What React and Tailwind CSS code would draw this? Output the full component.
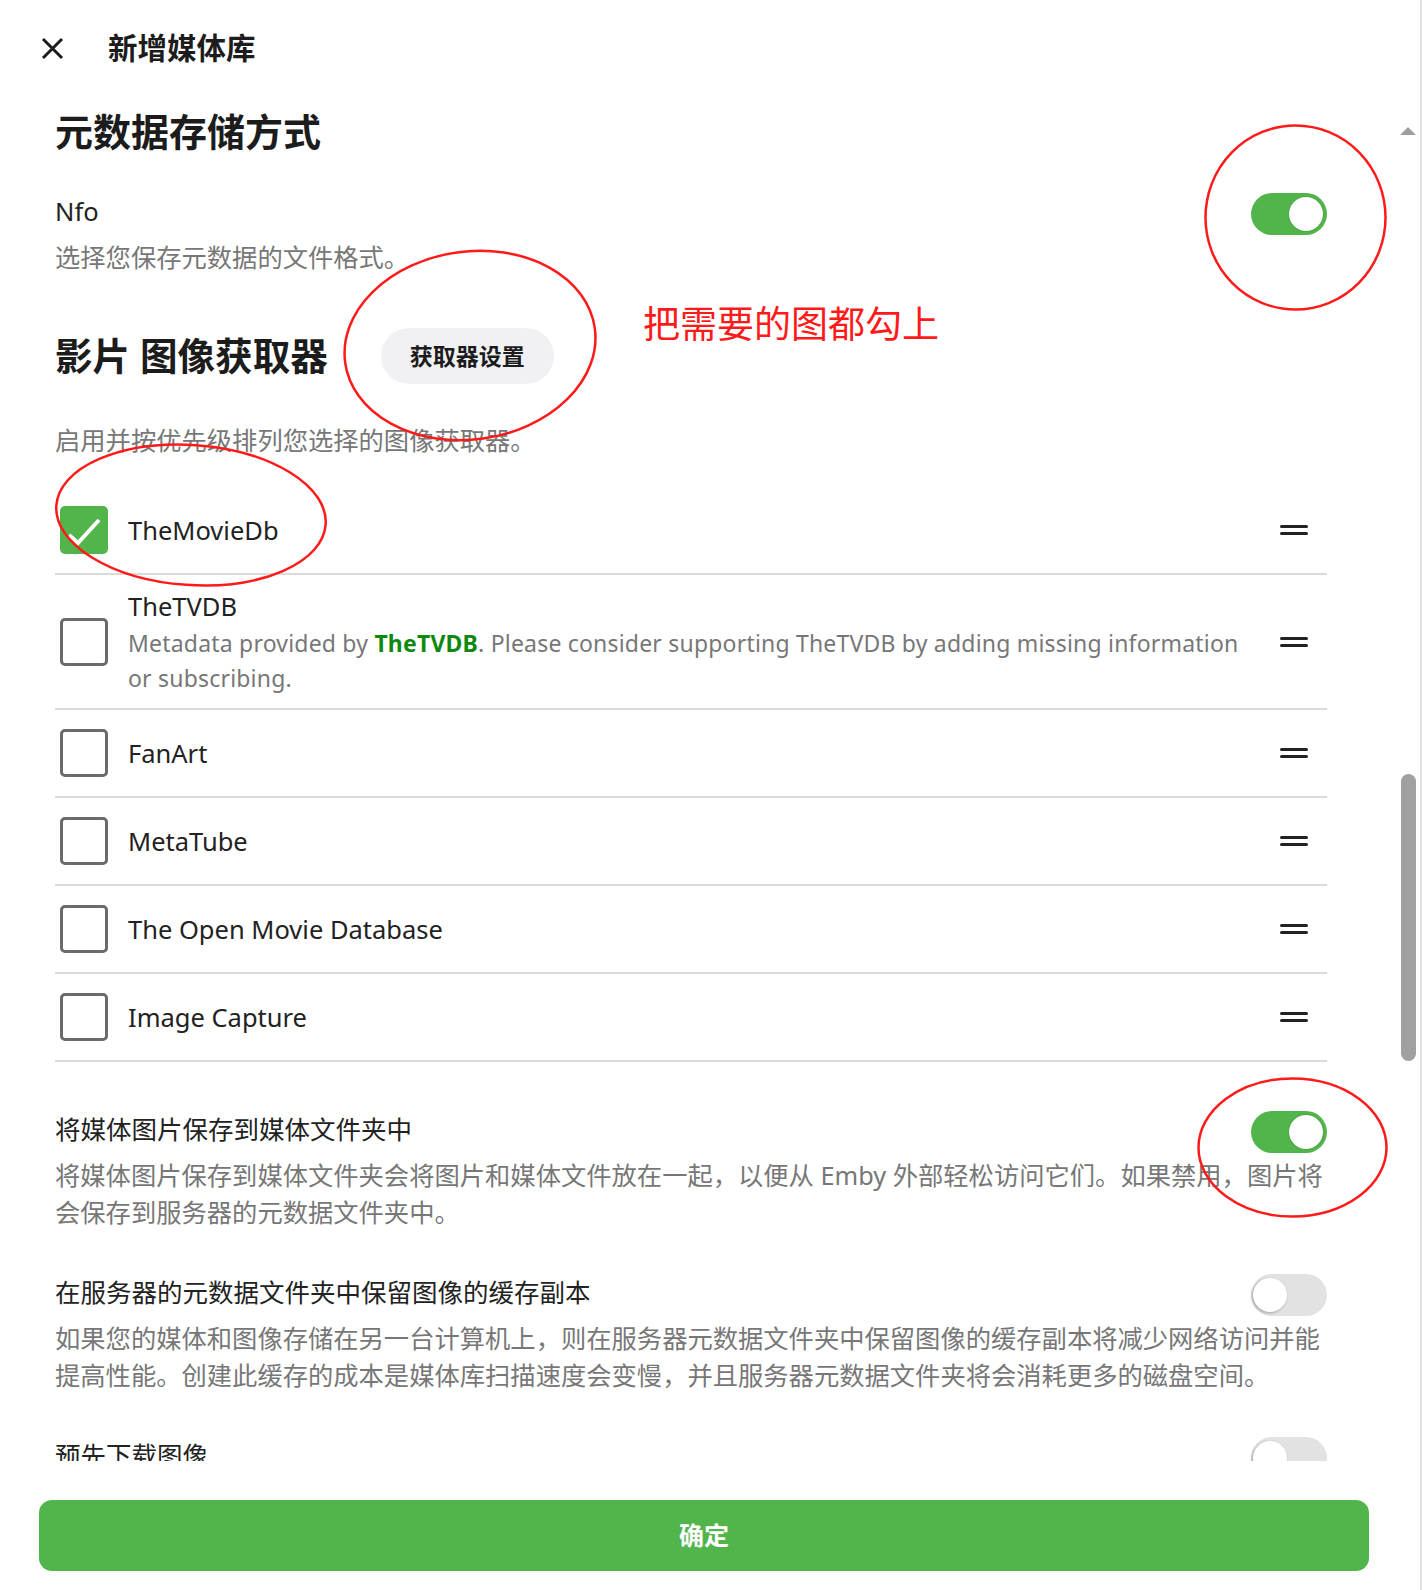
import React from 'react';

const fetchers = [
  { name: 'TheMovieDb', checked: true },
  { name: 'TheTVDB', tvdb: true },
  { name: 'FanArt' },
  { name: 'MetaTube' },
  { name: 'The Open Movie Database' },
  { name: 'Image Capture' },
];

const Toggle = ({ on }) => (
  <div className={`relative h-[42px] w-[76px] shrink-0 rounded-full ${on ? 'bg-[#52b54b]' : 'bg-[#e2e2e2]'}`}>
    <div
      className={`absolute top-[4px] h-[34px] w-[34px] rounded-full bg-white ${
        on ? 'right-[4px] shadow-[0_0_2px_rgba(0,0,0,0.25)]' : 'left-[2px] shadow-[-1px_1px_3px_rgba(0,0,0,0.3)]'
      }`}
    />
  </div>
);

const Checkbox = ({ checked }) =>
  checked ? (
    <div className="ml-[5px] flex h-[48px] w-[48px] shrink-0 items-center justify-center rounded-[5px] bg-[#52b54b]">
      <svg width="48" height="48" viewBox="0 0 48 48">
        <polyline points="9,29 18,37 39,14" fill="none" stroke="white" strokeWidth="4" />
      </svg>
    </div>
  ) : (
    <div className="ml-[5px] h-[48px] w-[48px] shrink-0 rounded-[5px] border-[3px] border-[#6a6a6a]" />
  );

const DragHandle = () => (
  <div className="mr-[19px] flex w-[28px] shrink-0 flex-col gap-[4px]">
    <div className="h-[3px] rounded-full bg-[#222]" />
    <div className="h-[3px] rounded-full bg-[#222]" />
  </div>
);

const Setting = ({ title, desc, on, className }) => (
  <div className={className}>
    <div className="flex h-[37px] items-start justify-between">
      <div className="text-[25.5px] leading-[37px] text-[#222]">{title}</div>
      <Toggle on={on} />
    </div>
    {desc && <div className="mt-[9px] text-[25.3px] leading-[37px] text-[#777]">{desc}</div>}
  </div>
);

export default function App() {
  return (
    <div
      className="relative flex h-[1590px] w-[1422px] flex-col overflow-hidden border-r-2 border-[#e2e2e2] bg-white"
      style={{ fontFamily: '"Noto Sans", "Noto Sans CJK SC", sans-serif' }}
    >
      {/* header */}
      <div className="flex h-[97px] shrink-0 items-center pl-[41px]">
        <svg width="23" height="23" viewBox="0 0 23 23">
          <path d="M2 2 L21 21 M21 2 L2 21" stroke="#1c1c1c" strokeWidth="3" />
        </svg>
        <div className="ml-[44px] text-[29.5px] font-bold text-[#1c1c1c]">新增媒体库</div>
      </div>

      {/* scroll area */}
      <div className="flex h-[1364px] shrink-0">
        <div className="w-[1400px] overflow-hidden pl-[55px] pr-[73px] pt-[10px]">
          <h1 className="text-[38px] font-bold leading-[48px] text-[#1c1c1c]">元数据存储方式</h1>

          <Setting className="mt-[38px]" title="Nfo" desc="选择您保存元数据的文件格式。" on />

          <div className="mt-[52px] flex h-[56px] items-center">
            <h2 className="text-[37.6px] font-bold leading-[48px] text-[#1c1c1c]">影片 图像获取器</h2>
            <button className="ml-[53px] h-[56px] rounded-full bg-[#f1f1f4] px-[29px] text-[23px] font-bold text-[#1c1c1c]">
              获取器设置
            </button>
          </div>

          <div className="mt-[38px] text-[25.3px] leading-[37px] text-[#777]">启用并按优先级排列您选择的图像获取器。</div>

          <div className="mt-[28px]">
            {fetchers.map((f) => (
              <div
                key={f.name}
                className={`flex items-center border-b-2 border-[#dadada] ${f.tvdb ? 'pb-[12px] pt-[13px]' : 'h-[88px]'}`}
              >
                <Checkbox checked={f.checked} />
                <div className="ml-[20px] mr-[24px] flex-1">
                  <div className="text-[25.5px] leading-[37px] text-[#222]">{f.name}</div>
                  {f.tvdb && (
                    <div className="mt-[1px] text-[23px] leading-[35px] tracking-[0.2px] text-[#777]">
                      Metadata provided by <span className="font-bold text-[#0d8a0d]">TheTVDB</span>. Please consider
                      supporting TheTVDB by adding missing information or subscribing.
                    </div>
                  )}
                </div>
                <DragHandle />
              </div>
            ))}
          </div>

          <Setting
            className="mt-[49px]"
            title="将媒体图片保存到媒体文件夹中"
            desc="将媒体图片保存到媒体文件夹会将图片和媒体文件放在一起，以便从 Emby 外部轻松访问它们。如果禁用，图片将会保存到服务器的元数据文件夹中。"
            on
          />
          <Setting
            className="mt-[43px]"
            title="在服务器的元数据文件夹中保留图像的缓存副本"
            desc="如果您的媒体和图像存储在另一台计算机上，则在服务器元数据文件夹中保留图像的缓存副本将减少网络访问并能提高性能。创建此缓存的成本是媒体库扫描速度会变慢，并且服务器元数据文件夹将会消耗更多的磁盘空间。"
          />
          <Setting className="mt-[43px]" title="预先下载图像" desc="在扫描媒体库时预先下载图像。" />
        </div>

        {/* scrollbar */}
        <div className="flex w-[16px] flex-col items-center">
          <svg className="mt-[30px]" width="16" height="8" viewBox="0 0 16 8">
            <polygon points="8,0 16,8 0,8" fill="#a0a0a0" />
          </svg>
          <div className="mt-[639px] h-[287px] w-[15px] rounded-full bg-[#a0a0a0]" />
        </div>
      </div>

      {/* footer */}
      <div className="mt-[39px] pl-[39px]">
        <button className="h-[71px] w-[1330px] rounded-[13px] bg-[#52b54b] text-[25px] font-bold text-white">确定</button>
      </div>

      {/* red annotations */}
      <svg className="pointer-events-none absolute left-0 top-0" width="1422" height="1590">
        <g fill="none" stroke="#ff1a1a" strokeWidth="2.5">
          <ellipse cx="1295.5" cy="217.5" rx="90" ry="92" />
          <ellipse cx="470" cy="345.5" rx="126" ry="94" transform="rotate(-8 470 345.5)" />
          <ellipse cx="191" cy="515" rx="135" ry="70" transform="rotate(4 191 515)" />
          <ellipse cx="1292.5" cy="1147.5" rx="94" ry="69" />
        </g>
      </svg>
      <div className="absolute left-[643px] top-[298px] text-[37px] leading-[52px] text-[#ff1a1a]">把需要的图都勾上</div>
    </div>
  );
}
